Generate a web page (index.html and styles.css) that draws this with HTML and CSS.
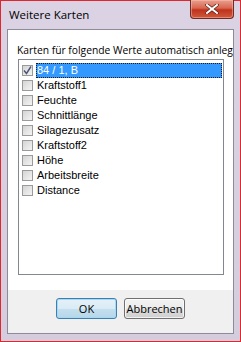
FILE: index.html
```html
<!DOCTYPE html>
<html>
<head>
<meta charset="utf-8">
<link rel="stylesheet" href="styles.css">
</head>
<body>
<div class="window">
  <div class="titlebar">
    <span class="title">Weitere Karten</span>
    <div class="close"><svg width="14" height="10" viewBox="0 0 14 10"><path d="M2 1 L12 9 M12 1 L2 9" stroke="#5a1a14" stroke-width="3.4" stroke-linecap="square"/><path d="M2 1 L12 9 M12 1 L2 9" stroke="#ffffff" stroke-width="2" stroke-linecap="square"/></svg></div>
  </div>
  <div class="client">
    <div class="content">
      <div class="label">Karten für folgende Werte automatisch anlegen:</div>
      <div class="listbox">
        <div class="row"><span class="cb checked"><svg width="9" height="9" viewBox="0 0 9 9"><path d="M1 4.5 L3.5 7.5 L8 0.5" fill="none" stroke="#4b5675" stroke-width="1.4"/></svg></span><span class="txt sel">84 / 1, B</span></div>
        <div class="row"><span class="cb"></span><span class="txt">Kraftstoff1</span></div>
        <div class="row"><span class="cb"></span><span class="txt">Feuchte</span></div>
        <div class="row"><span class="cb"></span><span class="txt">Schnittlänge</span></div>
        <div class="row"><span class="cb"></span><span class="txt">Silagezusatz</span></div>
        <div class="row"><span class="cb"></span><span class="txt">Kraftstoff2</span></div>
        <div class="row"><span class="cb"></span><span class="txt">Höhe</span></div>
        <div class="row"><span class="cb"></span><span class="txt">Arbeitsbreite</span></div>
        <div class="row"><span class="cb"></span><span class="txt">Distance</span></div>
      </div>
    </div>
    <div class="footer">
      <button class="btn default">OK</button>
      <button class="btn">Abbrechen</button>
    </div>
  </div>
</div>
</body>
</html>
```
FILE: styles.css
```css
html, body {
  margin: 0;
  padding: 0;
}
body {
  width: 241px;
  height: 342px;
  overflow: hidden;
  font-family: "Open Sans", "Noto Sans", sans-serif;
}
.window {
  box-sizing: border-box;
  width: 241px;
  height: 342px;
  border: 1px solid #e2262c;
  background: linear-gradient(#dbd3e4, #d5cddd);
  display: flex;
  flex-direction: column;
  padding: 0 6px 7px 6px;
}
.titlebar {
  height: 28px;
  display: flex;
  align-items: flex-start;
  flex-shrink: 0;
}
.title {
  font-size: 11.5px;
  color: #000;
  padding-left: 2px;
  margin-top: 6px;
  line-height: 16px;
}
.close {
  margin-left: auto;
  margin-top: -1px;
  width: 44px;
  height: 19px;
  box-sizing: border-box;
  border: 1px solid #6e2a24;
  border-top: none;
  border-radius: 0 0 4px 4px;
  background: linear-gradient(#e9a08e 0%, #d8664f 45%, #c0321c 55%, #cf5a3a 100%);
  display: flex;
  align-items: center;
  justify-content: center;
  box-shadow: inset 0 0 0 1px rgba(255,200,190,0.45);
}
.client {
  flex: 1;
  border: 1px solid #8e8b98;
  background: #fff;
  display: flex;
  flex-direction: column;
  min-height: 0;
}
.content {
  flex: 1;
  padding: 12px 9px 0 9px;
  overflow: hidden;
}
.label {
  font-size: 10.3px;
  line-height: 17px;
  white-space: nowrap;
  color: #000;
}
.listbox {
  margin: 0 0 0 1px;
  height: 216px;
  box-sizing: border-box;
  border: 1px solid #828790;
  padding: 3px 1px 0 3px;
  font-family: "Liberation Sans", Arial, sans-serif;
  font-size: 11px;
}
.row {
  height: 15px;
  display: flex;
  align-items: center;
}
.cb {
  width: 11px;
  height: 11px;
  box-sizing: border-box;
  border: 1px solid #9a9a9a;
  background: linear-gradient(135deg, #d4d4d4, #f4f4f4);
  flex-shrink: 0;
  margin-right: 3px;
  display: flex;
  align-items: center;
  justify-content: center;
}
.txt {
  padding: 0 2px 0 1px;
  line-height: 15px;
  height: 15px;
  color: #000;
}
.txt.sel {
  flex: 1;
  background: #3399ff;
  color: #fff;
  box-sizing: border-box;
  outline: 1px dotted #1a1a1a;
  outline-offset: -1px;
}
.footer {
  height: 43px;
  flex-shrink: 0;
  background: #f0f0f0;
  display: flex;
  justify-content: center;
  align-items: flex-start;
  gap: 7px;
  padding-top: 8px;
  box-sizing: border-box;
}
.btn {
  width: 61px;
  height: 21px;
  box-sizing: border-box;
  border: 1px solid #707070;
  border-radius: 3px;
  background: linear-gradient(#f3f3f3 0%, #ebebeb 50%, #dddddd 51%, #cfcfcf 100%);
  font-family: "Open Sans", "Noto Sans", sans-serif;
  font-size: 11px;
  color: #000;
  padding: 0;
  box-shadow: inset 0 0 0 1px rgba(255,255,255,0.7);
}
.btn.default {
  border-color: #3c7fb1;
  background: linear-gradient(#e5f1f8 0%, #d9ebf5 50%, #c4e0ef 51%, #b6d6e8 100%);
  box-shadow: inset 0 0 0 1px #a6d9f4;
}
```
